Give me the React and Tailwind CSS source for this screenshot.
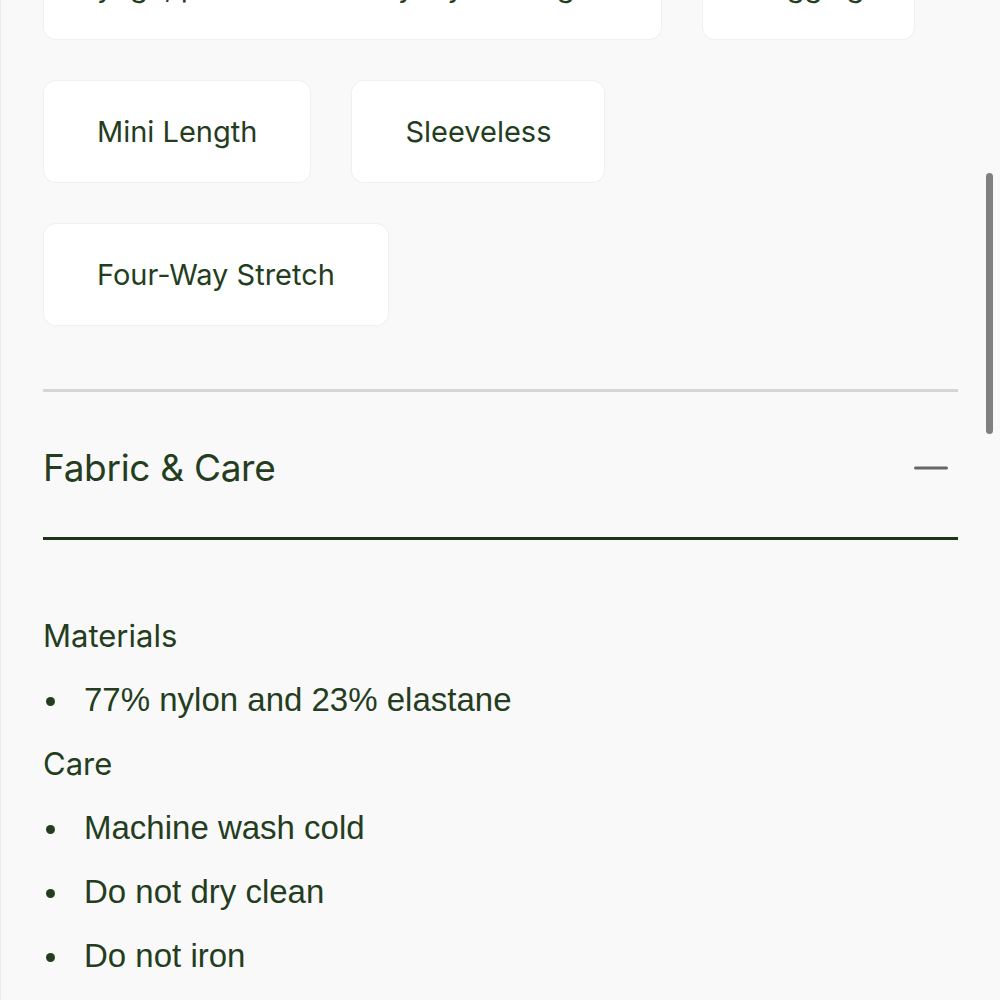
import React from "react";

const chips = [
  ["Mini Length", "Sleeveless"],
  ["Four-Way Stretch"],
];

// Fabric & Care body: headings and bullet rows share one 64px rhythm
const careRows = [
  { type: "heading", text: "Materials" },
  { type: "item", text: "77% nylon and 23% elastane" },
  { type: "heading", text: "Care" },
  { type: "item", text: "Machine wash cold" },
  { type: "item", text: "Do not dry clean" },
  { type: "item", text: "Do not iron" },
];

const arial = { fontFamily: "'Liberation Sans', Arial, sans-serif" };

function Chip({ label }) {
  return (
    <div className="h-[101px] flex items-center justify-center px-[53px] bg-white rounded-[12px] shadow-[0_0_0_1px_#f0f0ee] text-[29px] text-[#253d1f] whitespace-nowrap">
      {label}
    </div>
  );
}

function ClippedChip({ label, width, align = "justify-start" }) {
  return (
    <div
      className={`h-[101px] flex items-end ${align} px-[53px] pb-[38px] bg-white rounded-[12px] shadow-[0_0_0_1px_#f0f0ee] text-[29px] leading-none text-[#253d1f] whitespace-nowrap overflow-hidden ${width}`}
    >
      {label}
    </div>
  );
}

export default function App() {
  return (
    <div className="relative h-[1000px] overflow-hidden bg-[#f9f9f9] border-l border-[#ececea] font-['Inter',sans-serif] text-[#253d1f]">
      {/* Feature chips */}
      <div className="-mt-[62px] pl-[43px] flex flex-col gap-[42px]">
        <div className="flex gap-[42px]">
          <ClippedChip label="yoga, pilates and everyday training" width="w-[617px]" />
          <ClippedChip label="Jogging" width="w-[211px]" align="justify-center" />
        </div>
        {chips.map((row, i) => (
          <div key={i} className="flex gap-[42px]">
            {row.map((label) => (
              <Chip key={label} label={label} />
            ))}
          </div>
        ))}
      </div>

      {/* Fabric & Care accordion */}
      <section className="mx-[42px] mt-[64px]">
        <div className="h-[3px] bg-[#d6d6d2]" />
        <button className="w-full h-[145px] flex items-center justify-between pt-[6px]">
          <h2 className="text-[37px] tracking-[-0.3px] text-[#253d1f]">Fabric &amp; Care</h2>
          <svg width="34" height="4" viewBox="0 0 34 4" className="mr-[10px]">
            <line x1="1.5" y1="2" x2="32.5" y2="2" stroke="#666" strokeWidth="3" strokeLinecap="round" />
          </svg>
        </button>
        <div className="h-[3px] bg-[#1f351a]" />

        <ul className="pt-[64px]">
          {careRows.map((row) =>
            row.type === "heading" ? (
              <li key={row.text} className="h-[64px] leading-[64px] text-[31px]">
                {row.text}
              </li>
            ) : (
              <li key={row.text} className="h-[64px] leading-[64px] flex items-center text-[33px]" style={arial}>
                <span className="w-[41px] flex pl-[3px] pt-[3px]">
                  <span className="w-[9px] h-[9px] rounded-full bg-[#253d1f]" />
                </span>
                <span>{row.text}</span>
              </li>
            )
          )}
        </ul>
      </section>

      {/* Scrollbar */}
      <div className="absolute left-[985px] top-[173px] w-[7px] h-[261px] rounded-full bg-[#808080]" />
    </div>
  );
}
